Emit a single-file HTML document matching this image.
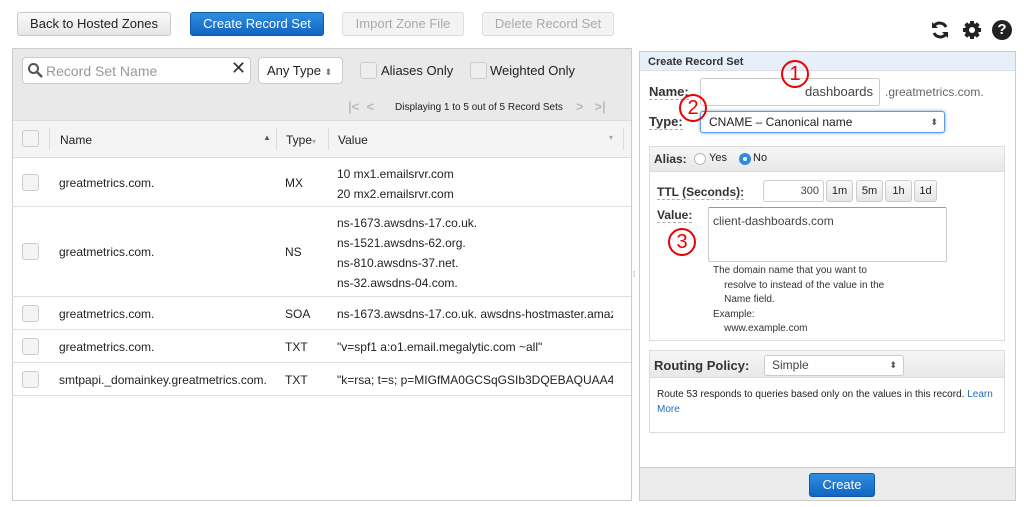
<!DOCTYPE html>
<html><head><meta charset="utf-8"><style>
*{box-sizing:border-box;margin:0;padding:0}
body{width:1024px;height:507px;background:#fff;font-family:"Liberation Sans",sans-serif;font-size:12px;color:#222;position:relative;overflow:hidden}
.a{position:absolute}
.btn{position:absolute;height:24px;border:1px solid #c8c8c8;border-radius:3px;background:linear-gradient(#fafafa,#e6e6e6);font-size:13px;text-align:center;line-height:22px;color:#222}
.dis{color:#aaa;background:#f3f3f3;border-color:#ddd}
.blue{background:linear-gradient(#2f8ee0,#1165c1);color:#fff;border-color:#0d5aa8}
.cb{position:absolute;width:17px;height:17px;border:1px solid #ccc;border-radius:3px;background:#f4f4f4}
.row{position:absolute;left:12px;width:619px;border-bottom:1px solid #ddd;font-size:12px}
.row span{position:absolute}
.circ{position:absolute;width:28px;height:28px;border:2px solid #e00;border-radius:50%;color:#e00;font-size:20px;text-align:center;line-height:24px}
.sb{position:absolute;height:22px;border:1px solid #ccc;border-radius:3px;background:linear-gradient(#fafafa,#e6e6e6);font-size:11px;text-align:center;line-height:20px}
.lb{position:absolute;font-weight:bold;font-size:12px;color:#333;border-bottom:1px dashed #aaa}
</style></head><body>
<div class="btn" style="left:17px;top:12px;width:154px">Back to Hosted Zones</div>
<div class="btn blue" style="left:190px;top:12px;width:134px">Create Record Set</div>
<div class="btn dis" style="left:342px;top:12px;width:122px">Import Zone File</div>
<div class="btn dis" style="left:482px;top:12px;width:132px">Delete Record Set</div>
<svg class="a" style="left:930px;top:20px" width="20" height="20" viewBox="0 0 20 20"><path d="M16 7A7 7 0 0 0 4 6M4 13a7 7 0 0 0 12 1" stroke="#222" stroke-width="3" fill="none"/><path d="M2 2v6h6zM18 18v-6h-6z" fill="#222"/></svg>
<svg class="a" style="left:962px;top:20px" width="20" height="20" viewBox="0 0 20 20"><g fill="#222"><circle cx="10" cy="10" r="7"/><rect x="8" y="1" width="4" height="18"/><rect x="1" y="8" width="18" height="4"/><rect x="8" y="1" width="4" height="18" transform="rotate(45 10 10)"/><rect x="8" y="1" width="4" height="18" transform="rotate(-45 10 10)"/></g><circle cx="10" cy="10" r="3" fill="#fff"/></svg>
<div class="a" style="left:992px;top:20px;width:20px;height:20px;border-radius:50%;background:#222;color:#fff;font-weight:bold;font-size:15px;text-align:center;line-height:20px">?</div>

<div class="a" style="left:12px;top:48px;width:620px;height:453px;border:1px solid #ccc"></div>
<div class="a" style="left:13px;top:49px;width:618px;height:71px;background:#e9e9e9"></div>
<div class="a" style="left:22px;top:57px;width:229px;height:27px;background:#fff;border:1px solid #ccc;border-radius:4px"></div>
<svg class="a" style="left:27px;top:62px" width="16" height="16"><circle cx="6.5" cy="6.5" r="4.5" stroke="#555" stroke-width="2" fill="none"/><path d="M10 10l5 5" stroke="#555" stroke-width="2.5"/></svg>
<div class="a" style="left:46px;top:63px;font-size:14px;color:#999">Record Set Name</div>
<div class="a" style="left:231px;top:58px;font-size:18px;color:#333">✕</div>
<div class="a" style="left:258px;top:57px;width:85px;height:27px;background:#fff;border:1px solid #ccc;border-radius:4px;font-size:13px;line-height:25px;padding-left:8px">Any Type <span style="font-size:9px;color:#777">⬍</span></div>
<div class="cb" style="left:360px;top:62px;background:#eee"></div>
<div class="a" style="left:381px;top:63px;font-size:13px">Aliases Only</div>
<div class="cb" style="left:470px;top:62px;background:#eee"></div>
<div class="a" style="left:490px;top:63px;font-size:13px">Weighted Only</div>
<div class="a" style="left:348px;top:99px;font-size:13px;color:#bbb;font-weight:bold">|&lt;&nbsp;&nbsp;&lt;</div>
<div class="a" style="left:395px;top:102px;font-size:10px">Displaying 1 to 5 out of 5 Record Sets</div>
<div class="a" style="left:576px;top:99px;font-size:13px;color:#bbb;font-weight:bold">&gt;&nbsp;&nbsp;&nbsp;&gt;|</div>
<div class="a" style="left:13px;top:120px;width:618px;height:38px;background:#f4f4f4;border-top:1px solid #ddd;border-bottom:1px solid #ddd"></div>
<div class="cb" style="left:22px;top:130px"></div>
<div class="a" style="left:49px;top:128px;width:1px;height:22px;background:#ddd"></div>
<div class="a" style="left:60px;top:133px;font-size:12px">Name</div>
<div class="a" style="left:263px;top:133px;font-size:8px;color:#555">▲</div>
<div class="a" style="left:276px;top:128px;width:1px;height:22px;background:#ddd"></div>
<div class="a" style="left:286px;top:133px;font-size:12px">Type<span style="font-size:8px;color:#aaa">▾</span></div>
<div class="a" style="left:328px;top:128px;width:1px;height:22px;background:#ddd"></div>
<div class="a" style="left:338px;top:133px;font-size:12px">Value</div>
<div class="a" style="left:609px;top:133px;font-size:8px;color:#aaa">▾</div>
<div class="a" style="left:623px;top:128px;width:1px;height:22px;background:#ddd"></div>

<div class="row" style="top:158px;height:49px"><div class="cb" style="left:10px;top:16px"></div><span style="left:47px;top:18px">greatmetrics.com.</span><span style="left:273px;top:18px">MX</span><span style="left:325px;top:6px;line-height:20px">10 mx1.emailsrvr.com<br>20 mx2.emailsrvr.com</span></div>
<div class="row" style="top:207px;height:90px"><div class="cb" style="left:10px;top:36px"></div><span style="left:47px;top:38px">greatmetrics.com.</span><span style="left:273px;top:38px">NS</span><span style="left:325px;top:6px;line-height:20px">ns-1673.awsdns-17.co.uk.<br>ns-1521.awsdns-62.org.<br>ns-810.awsdns-37.net.<br>ns-32.awsdns-04.com.</span></div>
<div class="row" style="top:297px;height:33px"><div class="cb" style="left:10px;top:8px"></div><span style="left:47px;top:10px">greatmetrics.com.</span><span style="left:273px;top:10px">SOA</span><span style="left:325px;top:10px;white-space:nowrap;width:276px;overflow:hidden">ns-1673.awsdns-17.co.uk. awsdns-hostmaster.amazon.com.</span></div>
<div class="row" style="top:330px;height:33px"><div class="cb" style="left:10px;top:8px"></div><span style="left:47px;top:10px">greatmetrics.com.</span><span style="left:273px;top:10px">TXT</span><span style="left:325px;top:10px">"v=spf1 a:o1.email.megalytic.com ~all"</span></div>
<div class="row" style="top:363px;height:33px"><div class="cb" style="left:10px;top:8px"></div><span style="left:47px;top:10px">smtpapi._domainkey.greatmetrics.com.</span><span style="left:273px;top:10px">TXT</span><span style="left:325px;top:10px;white-space:nowrap;width:276px;overflow:hidden">"k=rsa; t=s; p=MIGfMA0GCSqGSIb3DQEBAQUAA4GNADCB</span></div>

<div class="a" style="left:639px;top:51px;width:377px;height:450px;border:1px solid #ccc"></div>
<div class="a" style="left:640px;top:52px;width:375px;height:19px;background:#e7eff8;border-bottom:1px solid #dde"></div>
<div class="a" style="left:648px;top:56px;font-size:11px;font-weight:bold;color:#333">Create Record Set</div>
<div class="lb" style="left:649px;top:84px;font-size:13px">Name:</div>
<div class="a" style="left:700px;top:78px;width:180px;height:28px;border:1px solid #ccc;border-radius:3px;background:#fff;font-size:13px;text-align:right;padding-right:6px;line-height:26px;color:#444">dashboards</div>
<div class="a" style="left:885px;top:85px;font-size:12px;color:#666">.greatmetrics.com.</div>
<div class="lb" style="left:649px;top:114px;font-size:13px">Type:</div>
<div class="a" style="left:700px;top:111px;width:245px;height:22px;border:1px solid #5a9de6;box-shadow:0 0 3px #7ab;border-radius:3px;background:#fff;font-size:12px;line-height:20px;padding-left:8px">CNAME – Canonical name<span style="position:absolute;right:6px;font-size:9px;color:#555">⬍</span></div>
<div class="a" style="left:649px;top:146px;width:356px;height:195px;border:1px solid #ddd"></div>
<div class="a" style="left:650px;top:147px;width:354px;height:25px;background:linear-gradient(#f6f6f6,#e8e8e8);border-bottom:1px solid #ddd"></div>
<div class="a" style="left:654px;top:152px;font-size:12px;font-weight:bold;color:#333">Alias:</div>
<div class="a" style="left:694px;top:153px;width:12px;height:12px;border:1px solid #bbb;border-radius:50%;background:#fff"></div>
<div class="a" style="left:709px;top:152px;font-size:11px">Yes</div>
<div class="a" style="left:739px;top:153px;width:12px;height:12px;border-radius:50%;background:#2e8ae6"><div style="margin:4px;width:4px;height:4px;border-radius:50%;background:#fff"></div></div>
<div class="a" style="left:753px;top:152px;font-size:11px">No</div>
<div class="lb" style="left:657px;top:185px">TTL (Seconds):</div>
<div class="a" style="left:763px;top:180px;width:61px;height:22px;border:1px solid #ccc;border-radius:3px;font-size:11px;text-align:right;padding-right:4px;line-height:20px;color:#444">300</div>
<div class="sb" style="left:826px;top:180px;width:27px">1m</div>
<div class="sb" style="left:856px;top:180px;width:27px">5m</div>
<div class="sb" style="left:885px;top:180px;width:27px">1h</div>
<div class="sb" style="left:914px;top:180px;width:23px">1d</div>
<div class="lb" style="left:657px;top:208px">Value:</div>
<div class="a" style="left:708px;top:207px;width:239px;height:55px;border:1px solid #ccc;border-top-color:#999;border-radius:2px;font-size:12px;padding:6px 4px;color:#444">client-dashboards.com</div>
<div class="a" style="left:713px;top:264px;font-size:10px;line-height:14.5px;color:#333">The domain name that you want to<br>&nbsp;&nbsp;&nbsp;&nbsp;resolve to instead of the value in the<br>&nbsp;&nbsp;&nbsp;&nbsp;Name field.<br>Example:<br>&nbsp;&nbsp;&nbsp;&nbsp;www.example.com</div>
<div class="a" style="left:649px;top:350px;width:356px;height:83px;border:1px solid #ddd"></div>
<div class="a" style="left:650px;top:351px;width:354px;height:27px;background:linear-gradient(#f6f6f6,#e8e8e8);border-bottom:1px solid #ddd"></div>
<div class="a" style="left:654px;top:358px;font-size:13px;font-weight:bold;color:#333">Routing Policy:</div>
<div class="a" style="left:764px;top:355px;width:140px;height:21px;border:1px solid #ccc;border-radius:3px;background:#fff;font-size:12px;line-height:19px;padding-left:7px;color:#444">Simple<span style="position:absolute;right:6px;font-size:9px;color:#555">⬍</span></div>
<div class="a" style="left:657px;top:388px;font-size:10px;line-height:14.5px;width:345px">Route 53 responds to queries based only on the values in this record. <span style="color:#1a6fc4">Learn More</span></div>
<div class="a" style="left:640px;top:467px;width:375px;height:33px;background:#ececec;border-top:1px solid #ccc"></div>
<div class="btn blue" style="left:809px;top:473px;width:66px;font-size:13px">Create</div>
<div class="a" style="left:633px;top:270px;font-size:8px;color:#777">⁞</div>

<div class="circ" style="left:781px;top:60px">1</div>
<div class="circ" style="left:679px;top:94px">2</div>
<div class="circ" style="left:668px;top:228px">3</div>
</body></html>
